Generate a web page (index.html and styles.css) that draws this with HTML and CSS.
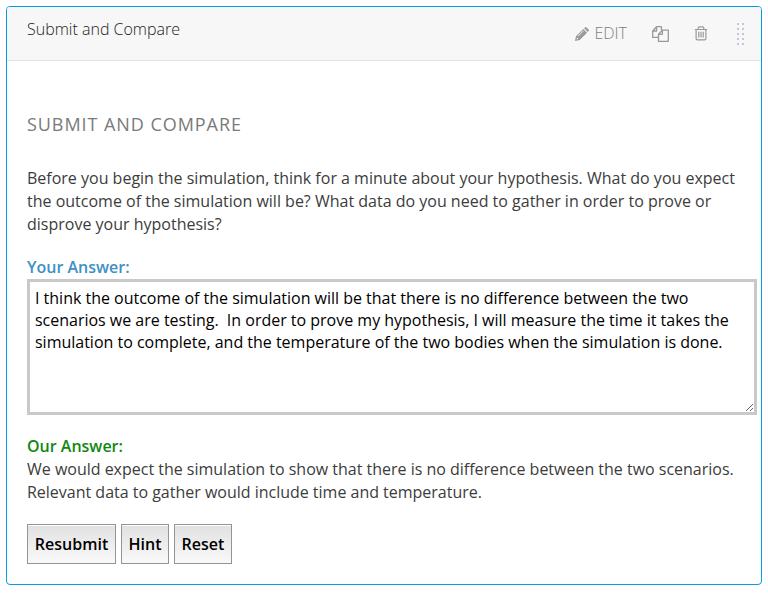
FILE: index.html
```
<!DOCTYPE html>
<html lang="en">
<head>
<meta charset="utf-8">
<title>Submit and Compare</title>
<link rel="stylesheet" href="styles.css">
</head>
<body>
<section class="card">
  <header class="card-header">
    <span class="card-title">Submit and Compare</span>
    <div class="actions">
      <a class="edit"><svg class="pencil" width="14" height="14" viewBox="0 0 14 14"><path fill="currentColor" fill-rule="evenodd" d="M0 14 1 9.3 8.3 2 12 5.7 4.7 13ZM2 10.6 1.5 12.5 3.4 12 2 10.6ZM3.2 9.4 8.6 4 8.2 3.6 2.8 9ZM9.1 1.2 9.9.4Q10.7-.2 11.5.4L13.6 2.5Q14.2 3.3 13.6 4.1L12.8 4.9Z"/></svg><span>EDIT</span></a>
      <svg class="copy" width="17" height="16" viewBox="0 0 17 16" fill="none" stroke="currentColor" stroke-width="1.3" stroke-linejoin="round"><path d="M6.3 11.4H.7V5L4.6.7H9.4V4M4.6.7V5H.7M10.4 4.2H16.3V15.3H6.5V8.3ZM10.4 4.2V8.3H6.5"/></svg>
      <svg class="trash" width="14" height="15" viewBox="0 0 14 15" fill="none" stroke="currentColor" stroke-width="1.2"><path d="M.8 3.5H13.2M4.2 3.4V2Q4.2.8 5.2.8H8.8Q9.8.8 9.8 2V3.4M2.1 3.6V12.4Q2.1 13.8 3.4 13.8H10.6Q11.9 13.8 11.9 12.4V3.6M4.8 5.8V11.5M7 5.8V11.5M9.2 5.8V11.5"/></svg>
      <svg class="grip" width="7" height="22" viewBox="0 0 7 22" fill="currentColor"><path d="M0 0h2v2H0zM5 0h2v2H5zM0 5h2v2H0zM5 5h2v2H5zM0 10h2v2H0zM5 10h2v2H5zM0 15h2v2H0zM5 15h2v2H5zM0 20h2v2H0zM5 20h2v2H5z"/></svg>
    </div>
  </header>
  <div class="card-body">
    <h2 class="heading">SUBMIT AND COMPARE</h2>
    <p class="question">Before you begin the simulation, think for a minute about your hypothesis. What do you expect<br>the outcome of the simulation will be? What data do you need to gather in order to prove or<br>disprove your hypothesis?</p>
    <label class="label yours" for="answer">Your Answer:</label>
    <textarea class="answer" id="answer" spellcheck="false">I think the outcome of the simulation will be that there is no difference between the two
scenarios we are testing.  In order to prove my hypothesis, I will measure the time it takes the
simulation to complete, and the temperature of the two bodies when the simulation is done.</textarea>
    <div class="label ours">Our Answer:</div>
    <p class="expected">We would expect the simulation to show that there is no difference between the two scenarios.<br>Relevant data to gather would include time and temperature.</p>
    <div class="buttons">
      <button class="btn resubmit">Resubmit</button>
      <button class="btn hint">Hint</button>
      <button class="btn reset">Reset</button>
    </div>
  </div>
</section>
</body>
</html>
```
FILE: styles.css
```
* { box-sizing: border-box; }
body {
  margin: 0;
  padding: 6px;
  background: #fff;
  color: #3c3c3c;
  font: 16px/23px "Open Sans", sans-serif;
}
.card {
  width: 756px;
  height: 579px;
  border: 1px solid #009fe6;
  border-radius: 4px;
  overflow: hidden;
}
.card-header {
  display: flex;
  justify-content: space-between;
  height: 54px;
  padding: 0 17px 0 20px;
  background: #f7f7f7;
  border-bottom: 1px solid #e2e2e2;
}
.card-title {
  padding-top: 10px;
  color: #222;
  font-size: 16px;
  font-weight: 300;
  line-height: 24px;
}
.actions {
  display: flex;
  align-items: center;
  color: #999;
}
.edit { display: flex; align-items: center; gap: 5px; font-weight: 300; }
.edit span { color: #808080; }
.pencil { margin-top: 1px; }
.copy { margin-left: 25px; }
.trash { margin-left: 25px; }
.grip { margin-left: 29px; margin-top: 1px; color: #c3c7d6; }
.card-body { padding: 51px 0 0 20px; white-space: nowrap; }
.heading {
  margin: 0 0 31px;
  color: #7a7a7a;
  font-size: 18px;
  font-weight: 400;
  line-height: 24px;
  letter-spacing: 0.94px;
}
.question, .expected { margin: 0; }
.expected { letter-spacing: -0.01px; }
.label { display: block; font-weight: 600; }
.yours { margin-top: 20px; color: #4090c4; }
.ours { margin-top: 20px; color: #108810; }
.answer {
  display: block;
  width: 730px;
  height: 136px;
  margin: 0;
  padding: 5px;
  border: 3px solid #c9c9c9;
  outline: 0;
  background: #fff;
  color: #000;
  font: 16px/22px "Open Sans", sans-serif;
  letter-spacing: -0.01px;
  white-space: pre;
  overflow: hidden;
  resize: both;
}
.buttons { display: flex; gap: 5px; margin-top: 20px; }
.btn {
  height: 40px;
  padding: 0;
  border: 1px solid #949494;
  border-radius: 0;
  background: linear-gradient(#e1e1e1, #f9f9f9);
  box-shadow: inset 0 1px 0 #fff;
  color: #000;
  font: 600 16px/22px "Open Sans", sans-serif;
}
.resubmit { width: 89px; }
.hint { width: 48px; }
.reset { width: 58px; }
```
